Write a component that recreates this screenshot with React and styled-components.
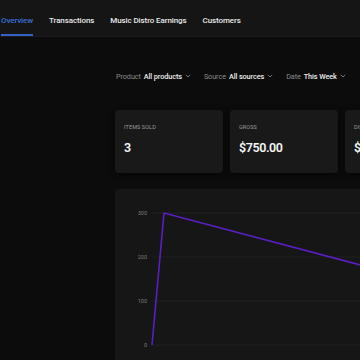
import React from 'react';
import styled, { createGlobalStyle } from 'styled-components';

const GlobalStyle = createGlobalStyle`
  html, body {
    margin: 0;
    padding: 0;
    background: #0c0c0c;
    overflow: hidden;
    font-family: Roboto, "Noto Sans", sans-serif;
  }
`;

const Page = styled.div`
  width: 360px;
  height: 360px;
  overflow: hidden;
  background: #0c0c0c;
`;

const NavBar = styled.nav`
  height: 37px;
  background: #151515;
  display: flex;
  align-items: stretch;
  gap: 16px;
  padding-left: 1px;
  border-bottom: 1px solid #1b1b1b;
  box-sizing: border-box;
`;

const Tab = styled.div`
  display: flex;
  align-items: center;
  font-size: 8px;
  font-weight: 500;
  letter-spacing: -0.1px;
  color: ${(p) => (p.$active ? '#3d6fd6' : '#e8e8e8')};
  border-bottom: 2px solid ${(p) => (p.$active ? '#3461c4' : 'transparent')};
  padding-top: 6px;
  box-sizing: border-box;
  white-space: nowrap;
`;

const Main = styled.main`
  padding-left: 116px;
  width: 600px;
`;

const Filters = styled.div`
  display: flex;
  gap: 13px;
  margin-top: 32px;
  height: 14px;
  align-items: center;
`;

const Filter = styled.div`
  display: flex;
  align-items: center;
  gap: 3px;
  font-size: 7.3px;
  letter-spacing: -0.1px;
  color: #8a8a8a;
  white-space: nowrap;

  b {
    color: #ececec;
    font-weight: 500;
  }
`;

const Chevron = () => (
  <svg width="6" height="4" viewBox="0 0 6 4">
    <path d="M0.8 0.8 L3 3 L5.2 0.8" fill="none" stroke="#8a8a8a" strokeWidth="0.8" />
  </svg>
);

const Cards = styled.div`
  display: flex;
  gap: 7px;
  margin-top: 27px;
  margin-left: -1px;
`;

const Card = styled.div`
  width: 108px;
  height: 63px;
  flex-shrink: 0;
  background: #191919;
  border-radius: 4px;
  box-shadow: 0 2px 6px rgba(0, 0, 0, 0.6);
  padding: 14px 0 0 9px;
  box-sizing: border-box;
`;

const CardLabel = styled.div`
  font-size: 5.5px;
  color: #9a9a9a;
  letter-spacing: 0.1px;
  text-transform: uppercase;
`;

const CardValue = styled.div`
  margin-top: 10px;
  font-size: 12.5px;
  font-weight: 600;
  color: #f4f4f4;
  letter-spacing: -0.4px;
`;

const ChartPanel = styled.div`
  margin-top: 16px;
  margin-left: -1px;
  width: 300px;
  height: 200px;
  background: #161616;
  border-radius: 4px;
`;

const stats = [
  { label: 'Items sold', value: '3' },
  { label: 'Gross', value: '$750.00' },
  { label: 'Discounts', value: '$0.00' },
];

const ticks = [
  { label: '300', y: 24 },
  { label: '200', y: 68 },
  { label: '100', y: 112 },
  { label: '0', y: 156 },
];

const Chart = () => (
  <svg width="300" height="200" viewBox="0 0 300 200">
    {ticks.map((t) => (
      <g key={t.label}>
        <line x1="37" x2="300" y1={t.y} y2={t.y} stroke="#202020" strokeWidth="1" />
        <text x="32" y={t.y + 2} textAnchor="end" fontSize="5.5" fill="#7a7a7a" fontFamily="Roboto, sans-serif">
          {t.label}
        </text>
      </g>
    ))}
    <polyline
      points="37,156 49,24 300,90.5"
      fill="none"
      stroke="#5a1fc2"
      strokeWidth="1.6"
      strokeLinejoin="round"
    />
  </svg>
);

const App = () => (
  <Page>
    <GlobalStyle />
    <NavBar>
      <Tab $active>Overview</Tab>
      <Tab>Transactions</Tab>
      <Tab>Music Distro Earnings</Tab>
      <Tab>Customers</Tab>
    </NavBar>
    <Main>
      <Filters>
        <Filter>
          Product <b>All products</b> <Chevron />
        </Filter>
        <Filter>
          Source <b>All sources</b> <Chevron />
        </Filter>
        <Filter>
          Date <b>This Week</b> <Chevron />
        </Filter>
      </Filters>
      <Cards>
        {stats.map((s) => (
          <Card key={s.label}>
            <CardLabel>{s.label}</CardLabel>
            <CardValue>{s.value}</CardValue>
          </Card>
        ))}
      </Cards>
      <ChartPanel>
        <Chart />
      </ChartPanel>
    </Main>
  </Page>
);

export default App;
